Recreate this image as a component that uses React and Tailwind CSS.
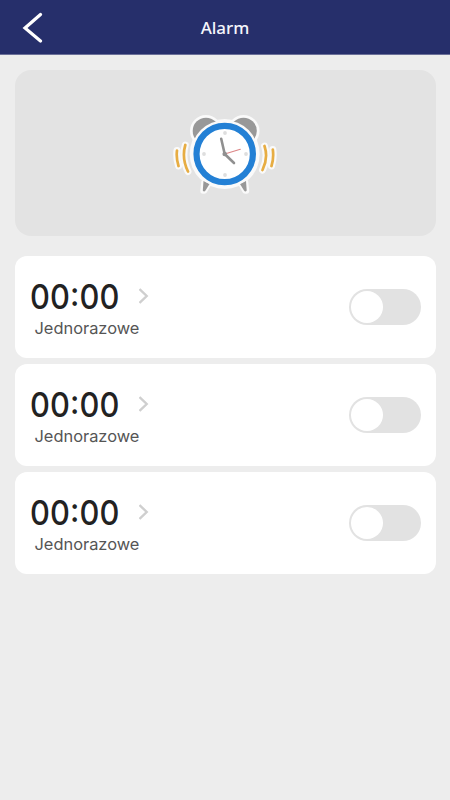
const alarms = [
  { hours: '00', minutes: '00', repeat: 'Jednorazowe' },
  { hours: '00', minutes: '00', repeat: 'Jednorazowe' },
  { hours: '00', minutes: '00', repeat: 'Jednorazowe' },
];

function AlarmClock() {
  return (
    <svg className="block" width="110" height="88" viewBox="170 110 110 88" fill="none" strokeLinecap="round">
      {/* white outline */}
      <path
        d="M177 150.500Q176 158 178.500 166M185.300 145Q181.500 158 188 171.500M272.800 149.500Q274 158 271.500 166M264.500 146Q268.500 158 262.500 170"
        stroke="#fafafa"
        strokeWidth="7"
      />
      <g fill="#fafafa">
        <circle cx="206" cy="131" r="16" />
        <circle cx="243.500" cy="131" r="16" />
        <circle cx="224.700" cy="154" r="35" />
      </g>
      <path d="M204 182L208.500 184L204.500 191L203 191ZM245.500 182L241 184L245 191L246.500 191Z" fill="#989898" stroke="#fafafa" strokeWidth="5.500" strokeLinejoin="round" />
      {/* bells and feet */}
      <g fill="#989898">
        <circle cx="206" cy="131" r="13.300" />
        <circle cx="243.500" cy="131" r="13.300" />
        <path d="M203.500 181L209.500 184L205.500 190.500Q204 192.500 202.800 190.500ZM246 181L240 184L244 190.500Q245.500 192.500 246.700 190.500Z" />
      </g>
      <circle cx="224.700" cy="154" r="33.800" fill="#fafafa" />
      <circle cx="224.700" cy="154" r="28.200" fill="#fff" stroke="#2380d5" strokeWidth="6.200" />
      <g fill="#dedede">
        <circle cx="225" cy="133" r="1.900" />
        <circle cx="225" cy="175" r="1.900" />
        <circle cx="204" cy="154" r="1.900" />
        <circle cx="246" cy="154" r="1.900" />
      </g>
      <path d="M224.700 154L221.200 138.800" stroke="#909090" strokeWidth="2.600" />
      <path d="M224.700 154L234 163" stroke="#909090" strokeWidth="2.600" />
      <path d="M224.700 154L240.300 149.300" stroke="#dc8586" strokeWidth="1.100" />
      <circle cx="224.700" cy="154" r="2.300" fill="#909090" />
      <path
        d="M177 150.500Q176 158 178.500 166M185.300 145Q181.500 158 188 171.500M272.800 149.500Q274 158 271.500 166M264.500 146Q268.500 158 262.500 170"
        stroke="#e7ad43"
        strokeWidth="2.700"
      />
    </svg>
  );
}

function Toggle() {
  return (
    <button type="button" role="switch" aria-checked="false" className="flex h-9 w-[72px] items-center rounded-full bg-[#e2e2e2] px-0.5">
      <span className="size-8 rounded-full bg-white" />
    </button>
  );
}

function AlarmCard({ hours, minutes, repeat }) {
  return (
    <li className="flex h-[102px] items-center justify-between rounded-xl bg-white pr-[15px] pl-[15px]">
      <div className="flex flex-col pt-[5px]">
        <div className="flex h-9 items-center">
          <span className="flex w-[109px] origin-left scale-x-[0.92] text-[33.5px] leading-9 font-medium tracking-[0.15px] text-[#222]">
            <span>{hours}</span>
            <span className="-translate-y-[3px]">:</span>
            <span>{minutes}</span>
          </span>
          <svg width="11" height="18" viewBox="0 0 11 18" fill="none" stroke="#cfcfcf" strokeWidth="2.400">
            <path d="M0.500 1L7.700 8L0.500 15" />
          </svg>
        </div>
        <span className="pt-px pl-[5px] text-[16.4px] leading-6 text-[#555]">{repeat}</span>
      </div>
      <Toggle />
    </li>
  );
}

export default function App() {
  return (
    <div className="min-h-screen bg-[#ededed] font-['Inter',sans-serif]">
      <header className="grid h-[55px] grid-cols-[1fr_auto_1fr] items-center border-b border-[#6b7099] bg-[#262f6b]">
        <button type="button" aria-label="Wstecz" className="pl-[22px]">
          <svg className="block" width="22" height="32" viewBox="0 0 22 32" fill="none" stroke="#fff" strokeWidth="3.200" strokeLinecap="round">
            <path d="M18.500 3.500L3 17L18.500 30" />
          </svg>
        </button>
        <h1 className="pt-0.5 font-['Noto_Sans',sans-serif] text-[17px] leading-6 font-medium text-[#f4f6fb]">Alarm</h1>
      </header>
      <main className="flex flex-col gap-5 px-[14.5px] pt-[14.5px]">
        <section className="flex h-[166px] items-center justify-center rounded-2xl bg-[#e3e3e3] pt-0.5">
          <AlarmClock />
        </section>
        <ul className="flex flex-col gap-1.5">
          {alarms.map((alarm, i) => (
            <AlarmCard key={i} {...alarm} />
          ))}
        </ul>
      </main>
    </div>
  );
}
